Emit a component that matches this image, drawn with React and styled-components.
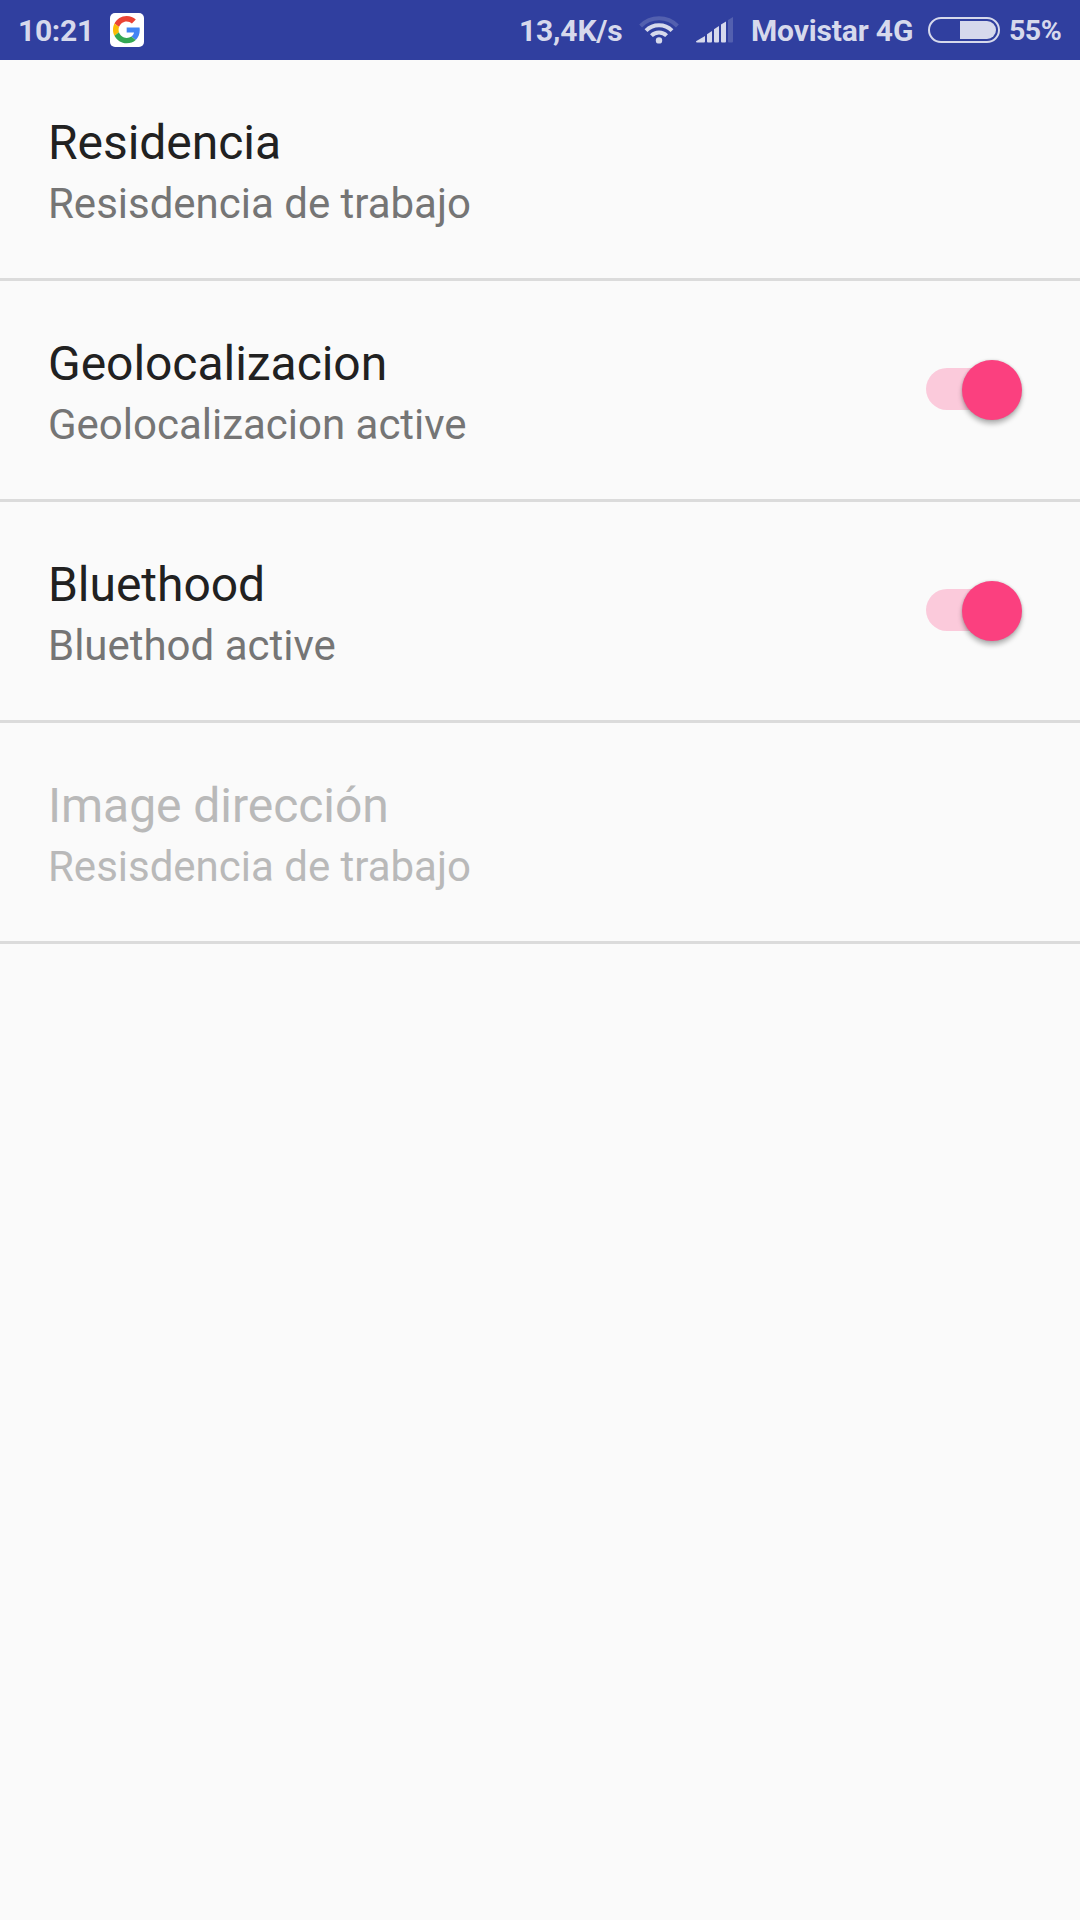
import React from "react";
import styled, { createGlobalStyle } from "styled-components";

const GlobalStyle = createGlobalStyle`
  body {
    margin: 0;
    background: #fafafa;
    font-family: Roboto, "Noto Sans", sans-serif;
  }
`;

const Screen = styled.div`
  display: flex;
  flex-direction: column;
  width: 1080px;
  height: 1920px;
  overflow: hidden;
  background: #fafafa;
`;

const StatusBar = styled.header`
  display: flex;
  align-items: center;
  justify-content: space-between;
  flex: none;
  box-sizing: border-box;
  height: 60px;
  padding: 0 19px 0 18px;
  background: #303f9f;
  color: #d6d9ec;
`;

const StatusGroup = styled.div`
  display: flex;
  align-items: center;
`;

const StatusText = styled.span`
  width: ${(p) => p.$width}px;
  margin-left: ${(p) => p.$gap || 0}px;
  padding-top: 2px;
  font-size: ${(p) => p.$size || 30}px;
  font-weight: 700;
  line-height: 36px;
  letter-spacing: ${(p) => p.$spacing || -0.15}px;
  white-space: nowrap;
`;

const StatusIcon = styled.svg`
  display: block;
  flex: none;
  margin-left: ${(p) => p.$gap}px;
`;

const List = styled.main`
  display: flex;
  flex-direction: column;
`;

const Row = styled.section`
  display: flex;
  justify-content: space-between;
  box-sizing: border-box;
  height: 221px;
  padding: 55px 54px 0 48px;
  border-bottom: 3px solid #dbdbdb;
  color: ${(p) => (p.$disabled ? "#b9b9b9" : "#212121")};
`;

const Labels = styled.div`
  display: flex;
  flex-direction: column;
  gap: 8px;
`;

const Title = styled.div`
  font-size: 48px;
  line-height: 56px;
  letter-spacing: -0.04px;
`;

const Summary = styled.div`
  font-size: 42px;
  line-height: 49px;
  letter-spacing: -0.01px;
  color: ${(p) => (p.$disabled ? "#b9b9b9" : "#757575")};
`;

const Track = styled.div`
  position: relative;
  width: 100px;
  height: 42px;
  margin-top: 32px;
  border-radius: 21px;
  background: linear-gradient(90deg, #fbcadb 70px, transparent 70px);
`;

const Thumb = styled.div`
  position: absolute;
  top: -8.5px;
  right: 4.5px;
  width: 60px;
  height: 60px;
  border-radius: 50%;
  background: #fb407f;
  box-shadow: 0 4px 5px rgba(0, 0, 0, 0.27), 0 0 3px rgba(0, 0, 0, 0.16);
`;

const GoogleIcon = () => (
  <StatusIcon $gap={16} width="34" height="34" viewBox="0 0 34 34">
    <rect width="34" height="34" rx="5" fill="#fff" />
    <g transform="translate(3 3) scale(0.5694)">
      <path fill="#ea4335" d="M24 9.5c3.54 0 6.71 1.22 9.21 3.6l6.85-6.85C35.9 2.38 30.47 0 24 0 14.62 0 6.51 5.38 2.56 13.22l7.98 6.19C12.43 13.72 17.74 9.5 24 9.5z" />
      <path fill="#4285f4" d="M46.98 24.55c0-1.57-.15-3.09-.38-4.55H24v9.02h12.94c-.58 2.96-2.26 5.48-4.78 7.18l7.73 6c4.51-4.18 7.09-10.36 7.09-17.65z" />
      <path fill="#fbbc05" d="M10.53 28.59c-.48-1.45-.76-2.99-.76-4.59s.27-3.14.76-4.59l-7.98-6.19C.92 16.46 0 20.12 0 24c0 3.88.92 7.54 2.56 10.78l7.97-6.19z" />
      <path fill="#34a853" d="M24 48c6.48 0 11.93-2.13 15.89-5.81l-7.73-6c-2.15 1.45-4.92 2.3-8.16 2.3-6.26 0-11.57-4.22-13.47-9.91l-7.98 6.19C6.51 42.62 14.62 48 24 48z" />
    </g>
  </StatusIcon>
);

const WifiIcon = () => (
  <StatusIcon $gap={16} width="40" height="28" viewBox="0 0 40 28" fill="none" strokeWidth="4">
    <path d="M1.6 10a26 26 0 0 1 36.8 0" stroke="#5360af" />
    <path d="M7 14.7a18.4 18.4 0 0 1 26 0" stroke="#d6d9ec" />
    <path d="M12.4 19.6a10.8 10.8 0 0 1 15.2 0" stroke="#d6d9ec" />
    <circle cx="20" cy="24.4" r="3.2" fill="#d6d9ec" />
  </StatusIcon>
);

const SignalIcon = () => (
  <StatusIcon $gap={17} width="38" height="26" viewBox="0 0 38 26" fill="#d6d9ec">
    <path d="M0 24.2 9 19v5.5q0 1-1 1H1q-1 0-1-1.3z" />
    <path d="M11 17.2 16 14v10.5q0 1-1 1h-3q-1 0-1-1z" />
    <path d="M18 12.2 23 9v15.5q0 1-1 1h-3q-1 0-1-1z" />
    <path d="M25 7.5 30 4.5v20q0 1-1 1h-3q-1 0-1-1z" />
    <path d="M32 3 37 0v24.5q0 1-1 1h-3q-1 0-1-1z" fill="#5360af" />
  </StatusIcon>
);

const BatteryIcon = () => (
  <StatusIcon $gap={15} width="72" height="26" viewBox="0 0 72 26">
    <rect x="1" y="1" width="70" height="24" rx="12" fill="none" stroke="#d6d9ec" strokeWidth="2" />
    <path d="M32 4h27a9 9 0 0 1 0 18H32z" fill="#d6d9ec" />
  </StatusIcon>
);

const preferences = [
  { title: "Residencia", summary: "Resisdencia de trabajo" },
  { title: "Geolocalizacion", summary: "Geolocalizacion active", toggle: true },
  { title: "Bluethood", summary: "Bluethod active", toggle: true },
  { title: "Image dirección", summary: "Resisdencia de trabajo", disabled: true },
];

export default function App() {
  return (
    <Screen>
      <GlobalStyle />
      <StatusBar>
        <StatusGroup>
          <StatusText $width={76} $spacing={-0.3}>10:21</StatusText>
          <GoogleIcon />
        </StatusGroup>
        <StatusGroup>
          <StatusText $width={104}>13,4K/s</StatusText>
          <WifiIcon />
          <SignalIcon />
          <StatusText $width={162} $gap={17}>Movistar 4G</StatusText>
          <BatteryIcon />
          <StatusText $width={52} $gap={9} $size={28.5} $spacing={-0.5}>55%</StatusText>
        </StatusGroup>
      </StatusBar>
      <List>
        {preferences.map((p) => (
          <Row key={p.title} $disabled={p.disabled}>
            <Labels>
              <Title>{p.title}</Title>
              <Summary $disabled={p.disabled}>{p.summary}</Summary>
            </Labels>
            {p.toggle && (
              <Track role="switch" aria-checked="true" aria-label={p.title}>
                <Thumb />
              </Track>
            )}
          </Row>
        ))}
      </List>
    </Screen>
  );
}
